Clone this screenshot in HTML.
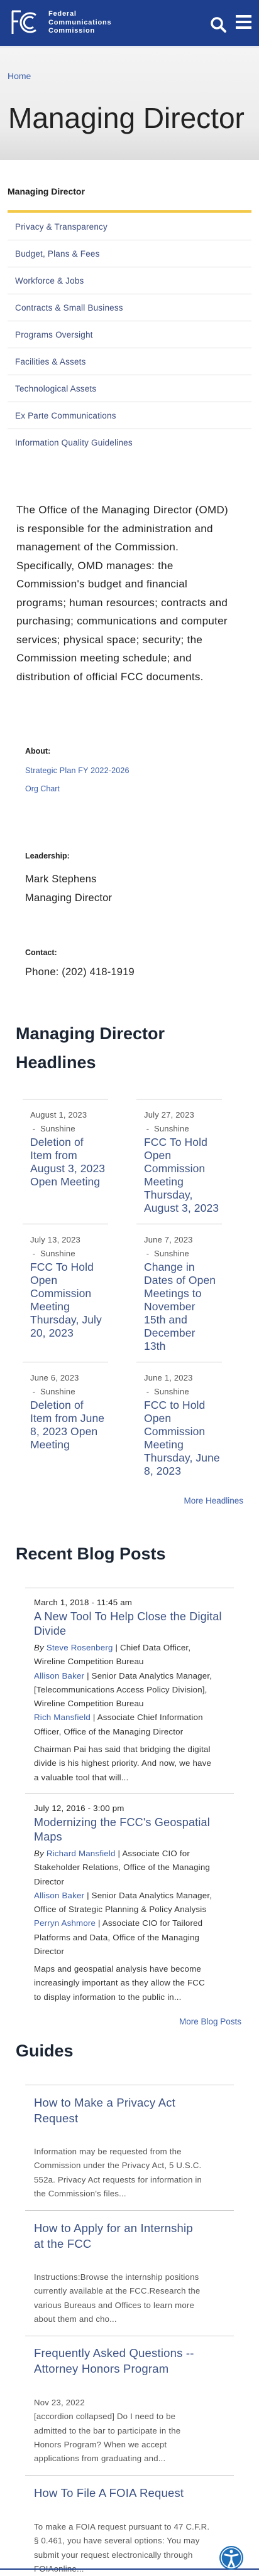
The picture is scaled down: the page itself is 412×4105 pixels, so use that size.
<!DOCTYPE html>
<html><head><meta charset="utf-8">
<style>
*{margin:0;padding:0;box-sizing:border-box}
body{width:412px;height:4095px;position:relative;background:#fff;font-family:"Liberation Sans",sans-serif;color:#222;overflow:hidden}
.a{position:absolute;white-space:nowrap}
.hdr{left:0;top:0;width:412px;height:73px;background:#1d3f8d}
.hero{left:0;top:73px;width:412px;height:182px;background:linear-gradient(#f4f4f4,#ececec 70%,#dcdcdc);border-top:3px solid #e6e9ef}
.nav{left:12px;width:388px;border-bottom:1px solid #ddd;height:43px;font-size:13.5px;color:#3b4b7c;padding-left:12px;line-height:43px;letter-spacing:.2px}
.lnk{color:#3b5ea8}
.hd{font-weight:bold;font-size:27px;color:#1b2533;left:25px}
.card{width:136px;border-top:1px solid #ccc}
.dt{font-size:13px;color:#555;line-height:22px;padding-left:12px;letter-spacing:.2px}
.ti{font-size:17.5px;color:#3c5285;line-height:21px;padding-left:12px;letter-spacing:.1px}
.bl{left:40px;width:332px;border-top:1px solid #ccc}
.bt{left:54px;font-size:13.3px;line-height:22.3px;color:#333;letter-spacing:.2px}
.bti{left:54px;font-size:18px;line-height:22.5px;color:#3c5285;letter-spacing:.2px}
.gt{left:54px;font-size:18.5px;line-height:24.5px;color:#3c5285;letter-spacing:.2px}
.gb{left:54px;font-size:13.2px;line-height:22.3px;color:#555;letter-spacing:.2px}
</style></head><body>
<div class="a hdr"></div>
<svg class="a" style="left:17px;top:16px" width="46" height="40" viewBox="0 0 46 40"><path d="M2 2H16M3 2V38M3 18H12" stroke="#fff" stroke-width="3" fill="none"/><path d="M40 8A15 15 0 1 0 40 32" stroke="#fff" stroke-width="3" fill="none"/><path d="M36 13A9 9 0 1 0 36 27" stroke="#fff" stroke-width="3" fill="none"/></svg>
<div class="a" style="left:77px;top:16px;color:#fff;font-size:11px;font-weight:bold;line-height:13.5px;letter-spacing:.8px">Federal<br>Communications<br>Commission</div>
<svg class="a" style="left:334px;top:26px" width="28" height="26" viewBox="0 0 28 26"><circle cx="11" cy="11" r="8" stroke="#fff" stroke-width="3.5" fill="none"/><path d="M17 17L24 24" stroke="#fff" stroke-width="4" stroke-linecap="round"/></svg>
<div class="a" style="left:375px;top:24px;width:25px;height:4px;background:#fff"></div>
<div class="a" style="left:375px;top:33px;width:25px;height:4px;background:#fff"></div>
<div class="a" style="left:375px;top:42px;width:25px;height:4px;background:#fff"></div>
<div class="a hero"></div>
<div class="a lnk" style="left:12px;top:113px;font-size:14px">Home</div>
<div class="a" style="left:13px;top:161px;font-size:46px;color:#222">Managing Director</div>
<div class="a" style="left:12px;top:297px;font-size:14px;font-weight:bold">Managing Director</div>
<div class="a" style="left:12px;top:335px;width:388px;height:4px;background:#f3c94a"></div>
<div class="a nav" style="top:340px">Privacy &amp; Transparency</div>
<div class="a nav" style="top:383px">Budget, Plans &amp; Fees</div>
<div class="a nav" style="top:426px">Workforce &amp; Jobs</div>
<div class="a nav" style="top:469px">Contracts &amp; Small Business</div>
<div class="a nav" style="top:512px">Programs Oversight</div>
<div class="a nav" style="top:555px">Facilities &amp; Assets</div>
<div class="a nav" style="top:598px">Technological Assets</div>
<div class="a nav" style="top:641px">Ex Parte Communications</div>
<div class="a nav" style="top:684px;border:none">Information Quality Guidelines</div>
<div class="a" style="left:26px;top:798px;font-size:17px;line-height:29.5px;color:#222;letter-spacing:.3px">The Office of the Managing Director (OMD)<br>is responsible for the administration and<br>management of the Commission.<br>Specifically, OMD manages: the<br>Commission's budget and financial<br>programs; human resources; contracts and<br>purchasing; communications and computer<br>services; physical space; security; the<br>Commission meeting schedule; and<br>distribution of official FCC documents.</div>
<div class="a" style="left:40px;top:1190px;font-size:12.5px;font-weight:bold">About:</div>
<div class="a lnk" style="left:40px;top:1221px;font-size:12.5px;letter-spacing:.2px">Strategic Plan FY 2022-2026</div>
<div class="a lnk" style="left:40px;top:1250px;font-size:12.5px">Org Chart</div>
<div class="a" style="left:40px;top:1357px;font-size:12.5px;font-weight:bold">Leadership:</div>
<div class="a" style="left:40px;top:1386px;font-size:16.5px;line-height:30px;letter-spacing:.2px">Mark Stephens<br>Managing Director</div>
<div class="a" style="left:40px;top:1511px;font-size:12.5px;font-weight:bold">Contact:</div>
<div class="a" style="left:40px;top:1540px;font-size:16.5px;letter-spacing:.2px">Phone: (202) 418-1919</div>
<div class="a hd" style="top:1624px;line-height:46px">Managing Director<br>Headlines</div>
<div class="a card" style="left:36px;top:1751px;padding-top:14px"><div class="dt">August 1, 2023<br>&nbsp;- &nbsp;Sunshine</div><div class="ti">Deletion of<br>Item from<br>August 3, 2023<br>Open Meeting</div></div>
<div class="a card" style="left:217px;top:1751px;padding-top:14px"><div class="dt">July 27, 2023<br>&nbsp;- &nbsp;Sunshine</div><div class="ti">FCC To Hold<br>Open<br>Commission<br>Meeting<br>Thursday,<br>August 3, 2023</div></div>
<div class="a card" style="left:36px;top:1950px;padding-top:14px"><div class="dt">July 13, 2023<br>&nbsp;- &nbsp;Sunshine</div><div class="ti">FCC To Hold<br>Open<br>Commission<br>Meeting<br>Thursday, July<br>20, 2023</div></div>
<div class="a card" style="left:217px;top:1950px;padding-top:14px"><div class="dt">June 7, 2023<br>&nbsp;- &nbsp;Sunshine</div><div class="ti">Change in<br>Dates of Open<br>Meetings to<br>November<br>15th and<br>December<br>13th</div></div>
<div class="a card" style="left:36px;top:2170px;padding-top:14px"><div class="dt">June 6, 2023<br>&nbsp;- &nbsp;Sunshine</div><div class="ti">Deletion of<br>Item from June<br>8, 2023 Open<br>Meeting</div></div>
<div class="a card" style="left:217px;top:2170px;padding-top:14px"><div class="dt">June 1, 2023<br>&nbsp;- &nbsp;Sunshine</div><div class="ti">FCC to Hold<br>Open<br>Commission<br>Meeting<br>Thursday, June<br>8, 2023</div></div>
<div class="a lnk" style="right:25px;top:2384px;font-size:13.5px">More Headlines</div>
<div class="a hd" style="top:2461px">Recent Blog Posts</div>
<div class="a bl" style="top:2530px"></div>
<div class="a bt" style="top:2543px;color:#222">March 1, 2018 - 11:45 am</div>
<div class="a bti" style="top:2565px">A New Tool To Help Close the Digital<br>Divide</div>
<div class="a bt" style="top:2615px"><i>By</i> <span class="lnk">Steve Rosenberg</span> | Chief Data Officer,<br>Wireline Competition Bureau<br><span class="lnk">Allison Baker</span> | Senior Data Analytics Manager,<br>[Telecommunications Access Policy Division],<br>Wireline Competition Bureau<br><span class="lnk">Rich Mansfield</span> | Associate Chief Information<br>Officer, Office of the Managing Director</div>
<div class="a bt" style="top:2777px">Chairman Pai has said that bridging the digital<br>divide is his highest priority. And now, we have<br>a valuable tool that will...</div>
<div class="a bl" style="top:2858px"></div>
<div class="a bt" style="top:2871px;color:#222">July 12, 2016 - 3:00 pm</div>
<div class="a bti" style="top:2893px">Modernizing the FCC's Geospatial<br>Maps</div>
<div class="a bt" style="top:2943px"><i>By</i> <span class="lnk">Richard Mansfield</span> | Associate CIO for<br>Stakeholder Relations, Office of the Managing<br>Director<br><span class="lnk">Allison Baker</span> | Senior Data Analytics Manager,<br>Office of Strategic Planning &amp; Policy Analysis<br><span class="lnk">Perryn Ashmore</span> | Associate CIO for Tailored<br>Platforms and Data, Office of the Managing<br>Director</div>
<div class="a bt" style="top:3127px">Maps and geospatial analysis have become<br>increasingly important as they allow the FCC<br>to display information to the public in...</div>
<div class="a lnk" style="right:28px;top:3214px;font-size:13.5px">More Blog Posts</div>
<div class="a hd" style="top:3253px">Guides</div>
<div class="a bl" style="top:3322px"></div>
<div class="a gt" style="top:3339px">How to Make a Privacy Act<br>Request</div>
<div class="a gb" style="top:3418px">Information may be requested from the<br>Commission under the Privacy Act, 5 U.S.C.<br>552a. Privacy Act requests for information in<br>the Commission's files...</div>
<div class="a bl" style="top:3522px"></div>
<div class="a gt" style="top:3539px">How to Apply for an Internship<br>at the FCC</div>
<div class="a gb" style="top:3618px">Instructions:Browse the internship positions<br>currently available at the FCC.Research the<br>various Bureaus and Offices to learn more<br>about them and cho...</div>
<div class="a bl" style="top:3722px"></div>
<div class="a gt" style="top:3738px">Frequently Asked Questions --<br>Attorney Honors Program</div>
<div class="a gb" style="top:3818px">Nov 23, 2022<br>[accordion collapsed] Do I need to be<br>admitted to the bar to participate in the<br>Honors Program? When we accept<br>applications from graduating and...</div>
<div class="a bl" style="top:3944px"></div>
<div class="a gt" style="top:3961px">How To File A FOIA Request</div>
<div class="a gb" style="top:4016px">To make a FOIA request pursuant to 47 C.F.R.<br>§ 0.461, you have several options: You may<br>submit your request electronically through<br>FOIAonline...</div>
<div class="a" style="left:0;top:4093px;width:412px;height:2px;background:#1d3f8d"></div>
<svg class="a" style="left:348px;top:4056px" width="40" height="40" viewBox="0 0 40 40"><circle cx="20" cy="20" r="19" fill="#1f6fb8"/><circle cx="20" cy="20" r="16" fill="none" stroke="#fff" stroke-width="1.5"/><circle cx="20" cy="10" r="2.6" fill="#fff"/><path d="M10 15L20 17L30 15M20 17V24M20 24L16 33M20 24L24 33" stroke="#fff" stroke-width="3" fill="none" stroke-linecap="round"/></svg>
</body></html>
